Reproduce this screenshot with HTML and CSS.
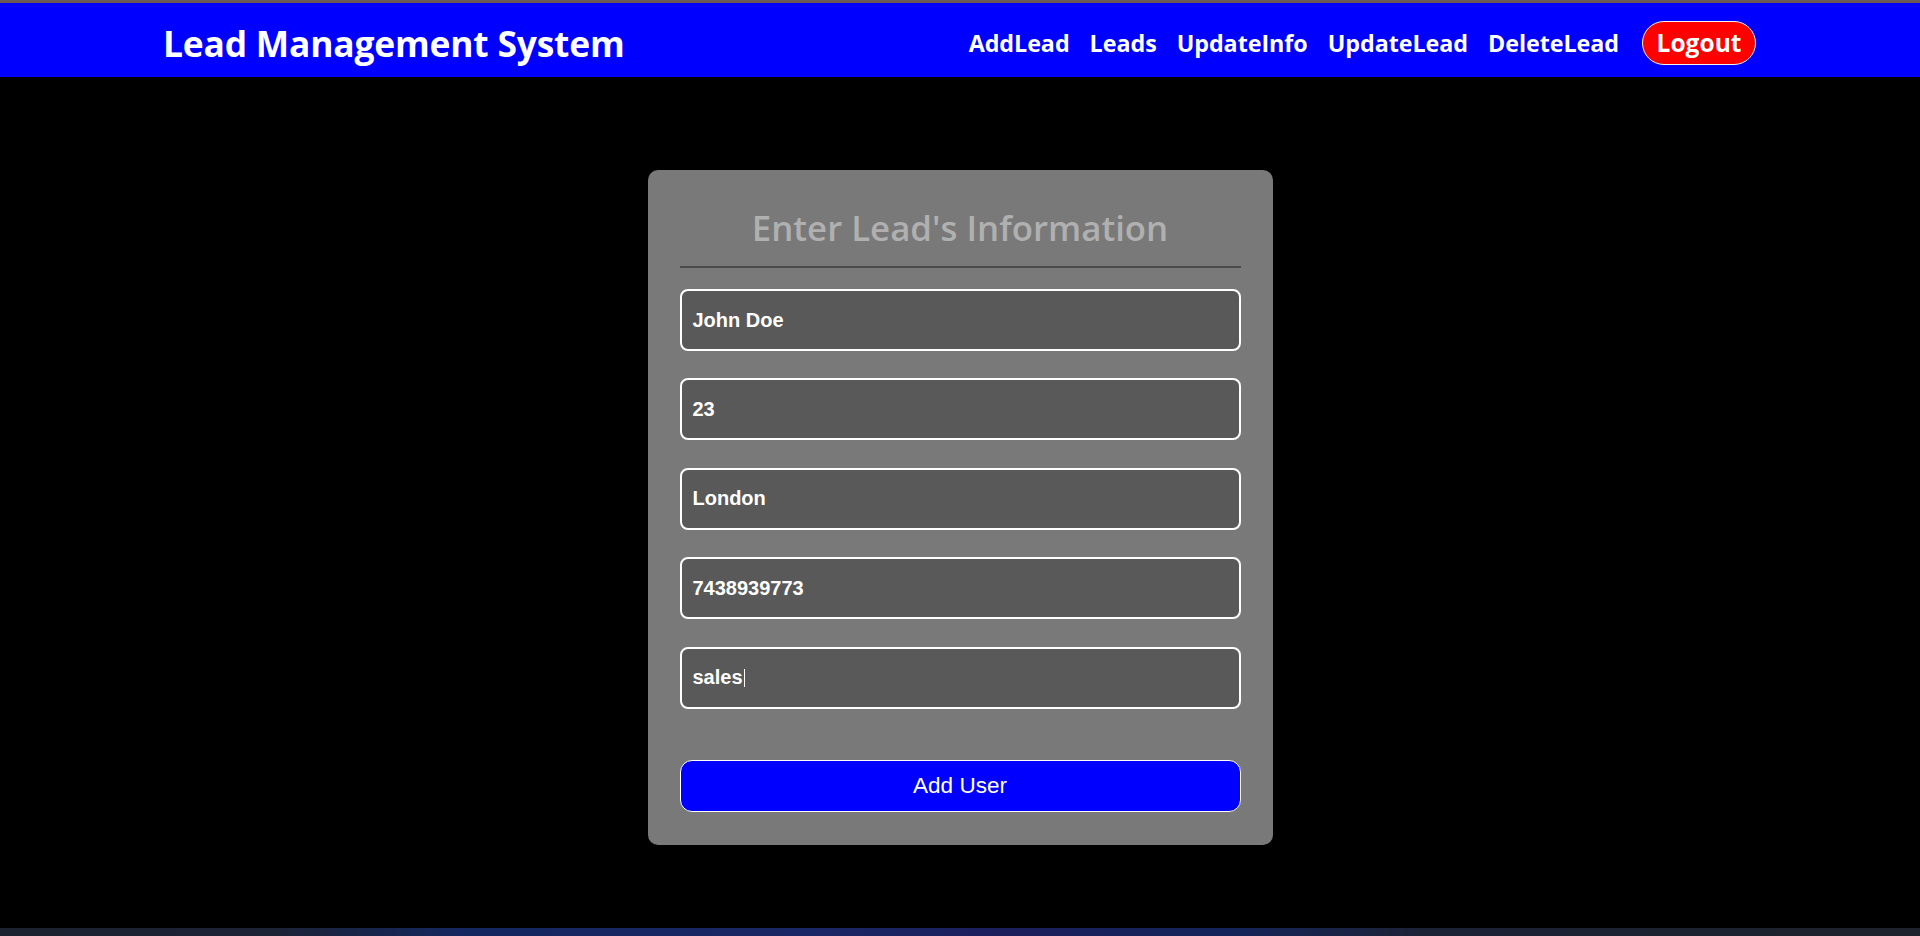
FILE: index.html
```html
<!DOCTYPE html>
<html lang="en">
<head>
<meta charset="utf-8">
<title>Lead Management System</title>
<link rel="stylesheet" href="styles.css">
</head>
<body>
<div class="topline"></div>
<header class="nav">
  <div class="brand">Lead Management System</div>
  <nav class="links">
    <a class="link" href="#">AddLead</a>
    <a class="link" href="#">Leads</a>
    <a class="link" href="#">UpdateInfo</a>
    <a class="link" href="#">UpdateLead</a>
    <a class="link" href="#">DeleteLead</a>
    <button class="logout" type="button">Logout</button>
  </nav>
</header>
<main class="main">
  <form class="card">
    <h2 class="card-title">Enter Lead's Information</h2>
    <hr class="divider">
    <div class="fields">
      <div class="field">John Doe</div>
      <div class="field">23</div>
      <div class="field">London</div>
      <div class="field">7438939773</div>
      <div class="field">sales<span class="caret"></span></div>
    </div>
    <button class="submit" type="button">Add User</button>
  </form>
</main>
<div class="taskbar"></div>
</body>
</html>
```

FILE: styles.css
```css
html, body {
  margin: 0;
  padding: 0;
}
body {
  background: #000;
  min-height: 100vh;
  display: flex;
  flex-direction: column;
  font-family: "Open Sans", "Noto Sans", sans-serif;
}
.topline {
  height: 3px;
  background: #6b5a58;
}
.nav {
  height: 74px;
  box-sizing: border-box;
  background: #0000ff;
  display: flex;
  align-items: center;
  justify-content: space-between;
  padding: 6px 164px 0 163px;
}
.brand {
  color: #fff;
  font-weight: 700;
  font-size: 35.4px;
  letter-spacing: -0.2px;
}
.links {
  display: flex;
  align-items: center;
  gap: 20px;
}
.link {
  color: #fff;
  text-decoration: none;
  font-weight: 700;
  font-size: 23.3px;
  letter-spacing: -0.05px;
}
.logout {
  margin-left: 3px;
  height: 44px;
  width: 114px;
  box-sizing: border-box;
  background: #ff0000;
  color: #fff;
  border: 1px solid #f2f2f2;
  border-radius: 22px;
  font-family: "Open Sans", "Noto Sans", sans-serif;
  font-weight: 700;
  font-size: 24.5px;
  padding: 0;
  line-height: 1;
}
.main {
  flex: 1;
  padding-top: 93px;
}
.card {
  width: 625px;
  box-sizing: border-box;
  margin: 0 auto;
  background: #797979;
  border-radius: 10px;
  padding: 33px 32px 33px;
  display: flex;
  flex-direction: column;
}
.card-title {
  margin: 0;
  text-align: center;
  color: #b0b0b0;
  font-weight: 600;
  font-size: 34.8px;
  line-height: 49px;
}
.divider {
  margin: 14px 0 21px;
  border: 0;
  height: 2px;
  background: #4a4a4a;
}
.fields {
  display: flex;
  flex-direction: column;
  gap: 27.4px;
}
.field {
  height: 62px;
  box-sizing: border-box;
  border: 2px solid #fff;
  border-radius: 8px;
  background: #595959;
  padding: 0 11px;
  display: flex;
  align-items: center;
  color: #fff;
  font-family: "Liberation Sans", Arial, sans-serif;
  font-weight: 700;
  font-size: 20px;
}
.caret {
  display: inline-block;
  width: 1px;
  height: 18px;
  margin-left: 1px;
  background: #fff;
}
.submit {
  margin-top: 51.5px;
  height: 52px;
  width: 100%;
  box-sizing: border-box;
  background: #0000ff;
  color: #fff;
  border: 1px solid #fff;
  border-radius: 12px;
  font-family: "Liberation Sans", Arial, sans-serif;
  font-size: 22.5px;
  font-weight: 400;
  padding: 0;
}
.taskbar {
  height: 8px;
  background: linear-gradient(90deg, #1d2230 0%, #1c2335 14%, #14275f 24%, #1a2766 42%, #1b1f5c 52%, #14245a 64%, #1c2236 74%, #1e222c 100%);
}
```
